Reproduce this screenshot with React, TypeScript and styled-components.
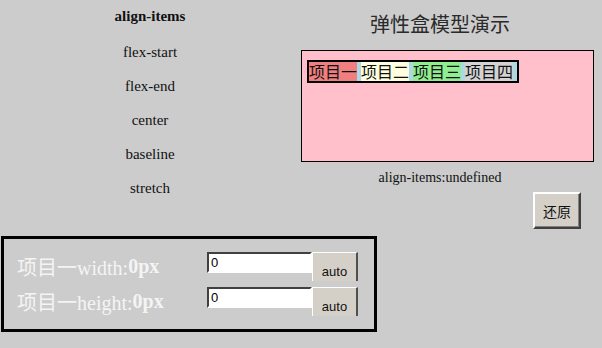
import styled, { createGlobalStyle } from "styled-components";

const GlobalStyle = createGlobalStyle`
  html, body {
    margin: 0;
    padding: 0;
    background: #cccccc;
  }
  * {
    box-sizing: border-box;
  }
`;

const serif = `"Liberation Serif", "Noto Sans CJK SC", serif`;
const cjk = `"Noto Sans CJK SC", "Liberation Sans", sans-serif`;

const Page = styled.div`
  width: 602px;
  height: 348px;
  background: #cccccc;
  overflow: hidden;
`;

const Top = styled.div`
  display: flex;
`;

const Menu = styled.div`
  width: 300px;
  display: flex;
  flex-direction: column;
  align-items: center;
  font-family: ${serif};
  font-size: 15px;
  color: #111;
`;

const MenuTitle = styled.div`
  height: 32px;
  line-height: 32px;
  font-weight: bold;
  margin-bottom: 3px;
`;

const MenuItem = styled.div`
  height: 34px;
  line-height: 34px;
  cursor: pointer;
`;

const Demo = styled.div`
  width: 302px;
  display: flex;
  flex-direction: column;
`;

const Title = styled.div`
  width: 280px;
  text-align: center;
  font-family: ${cjk};
  font-size: 20px;
  line-height: 40px;
  margin: 4px 0 6px;
  color: #2a2a2a;
`;

const Stage = styled.div`
  width: 293px;
  height: 112px;
  margin-left: 1px;
  border: 1px solid #000;
  background: #ffc0cb;
  padding: 9px 5px;
  display: flex;
  align-items: flex-start;
`;

const FlexBox = styled.div`
  display: flex;
  border: 2px solid #000;
  background: #add8e6;
`;

const Item = styled.div<{ $bg: string }>`
  background: ${(p) => p.$bg};
  font-family: ${cjk};
  font-size: 16px;
  line-height: 19px;
  margin-right: 4px;
  color: #111;
`;

const Status = styled.div`
  width: 280px;
  text-align: center;
  font-family: ${serif};
  font-size: 14px;
  line-height: 20px;
  margin-top: 6px;
  color: #111;
`;

const ResetRow = styled.div`
  display: flex;
  justify-content: flex-end;
  padding-right: 21px;
  margin-top: 4px;
`;

const ResetButton = styled.button`
  width: 48px;
  height: 37px;
  padding: 0;
  background: #d4d0c8;
  border: 2px solid;
  border-color: #ffffff #404040 #404040 #ffffff;
  box-shadow: inset -1px -1px 0 #808080;
  font-family: ${cjk};
  font-size: 14px;
  color: #111;
`;

const Panel = styled.div`
  width: 376px;
  height: 96px;
  margin: 7px 0 0 1px;
  border: 3px solid #000;
  padding: 13px 0 0 13px;
  display: grid;
  grid-template-columns: 190px 105px 46px;
  grid-auto-rows: 29px;
  row-gap: 6px;
`;

const Label = styled.div`
  font-family: ${serif};
  font-size: 20px;
  color: #f4f4f4;
  display: flex;
  align-items: center;
  white-space: nowrap;
  b {
    font-weight: bold;
  }
`;

const NumberInput = styled.input`
  width: 105px;
  height: 21px;
  padding: 0 2px;
  border: 2px solid;
  border-color: #404040 #ffffff #ffffff #404040;
  background: #fff;
  font-family: "Liberation Sans", sans-serif;
  font-size: 13px;
  color: #000;
  outline: none;
`;

const AutoButton = styled.button`
  width: 46px;
  height: 29px;
  padding: 9px 0 0;
  background: #d4d0c8;
  border: none;
  border-left: 1px solid #ffffff;
  border-top: 1px solid #ffffff;
  border-right: 2px solid #505050;
  font-family: "Liberation Sans", sans-serif;
  font-size: 13px;
  color: #111;
`;

const options = ["flex-start", "flex-end", "center", "baseline", "stretch"];

const items = [
  { text: "项目一", bg: "#f08080" },
  { text: "项目二", bg: "#ffffe0" },
  { text: "项目三", bg: "#90ee90" },
  { text: "项目四", bg: "#d3d3d3" },
];

export default function App() {
  return (
    <Page>
      <GlobalStyle />
      <Top>
        <Menu>
          <MenuTitle>align-items</MenuTitle>
          {options.map((o) => (
            <MenuItem key={o}>{o}</MenuItem>
          ))}
        </Menu>
        <Demo>
          <Title>弹性盒模型演示</Title>
          <Stage>
            <FlexBox>
              {items.map((it) => (
                <Item key={it.text} $bg={it.bg}>
                  {it.text}
                </Item>
              ))}
            </FlexBox>
          </Stage>
          <Status>align-items:undefined</Status>
          <ResetRow>
            <ResetButton>还原</ResetButton>
          </ResetRow>
        </Demo>
      </Top>
      <Panel>
        <Label>
          项目一width:<b>0px</b>
        </Label>
        <NumberInput defaultValue="0" />
        <AutoButton>auto</AutoButton>
        <Label>
          项目一height:<b>0px</b>
        </Label>
        <NumberInput defaultValue="0" />
        <AutoButton>auto</AutoButton>
      </Panel>
    </Page>
  );
}
